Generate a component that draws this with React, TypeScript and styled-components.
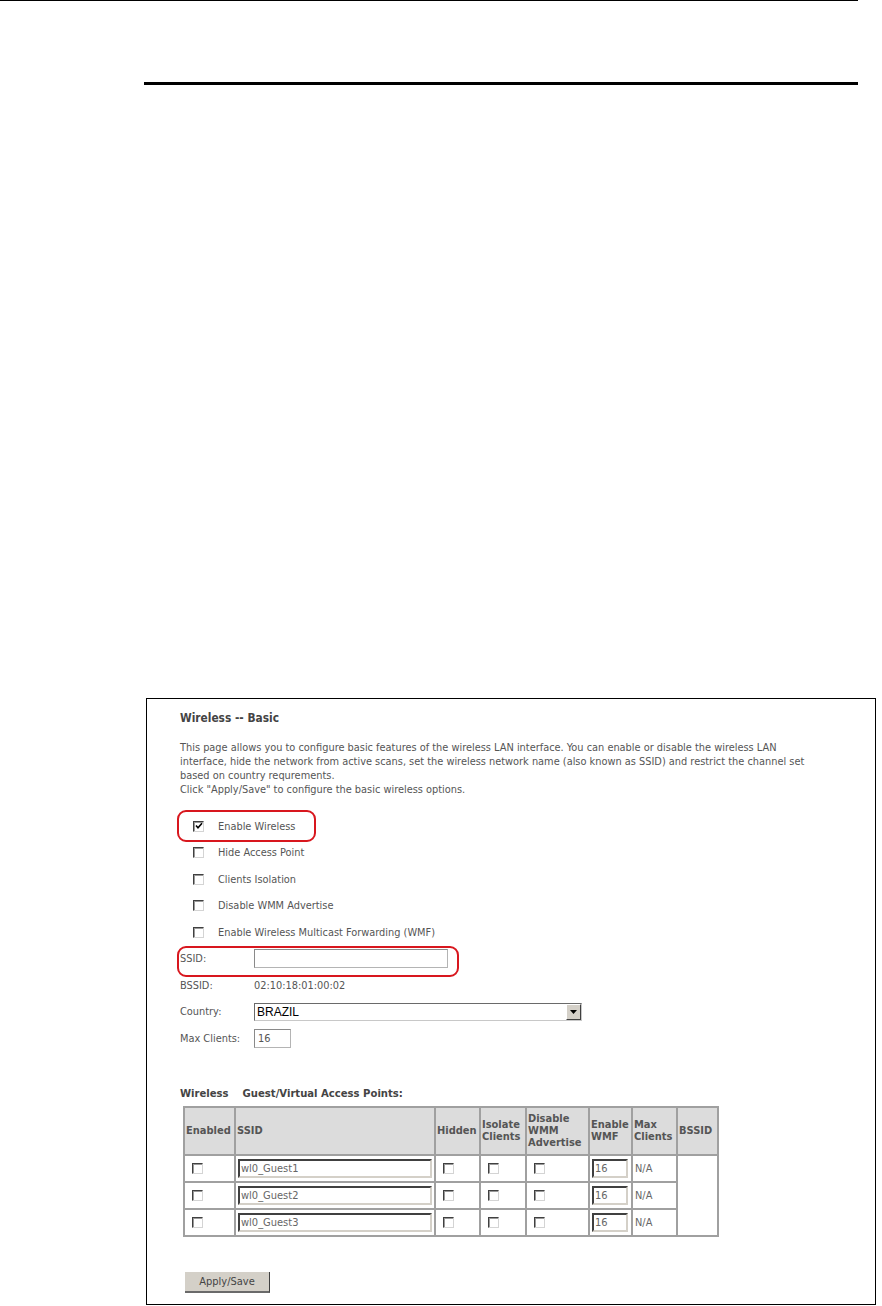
import React from 'react';
import styled, { createGlobalStyle } from 'styled-components';

const GlobalStyle = createGlobalStyle`
  body {
    margin: 0;
    background: #ffffff;
    font-family: "DejaVu Sans Condensed", "Liberation Sans", sans-serif;
  }
`;

const FONT = `"DejaVu Sans Condensed", "Liberation Sans", sans-serif`;

interface GuestAp {
  ssid: string;
  maxClients: string;
}

const guests: GuestAp[] = [
  { ssid: 'wl0_Guest1', maxClients: '16' },
  { ssid: 'wl0_Guest2', maxClients: '16' },
  { ssid: 'wl0_Guest3', maxClients: '16' },
];

const options = [
  { label: 'Enable Wireless', checked: true, ring: true },
  { label: 'Hide Access Point', checked: false, ring: false },
  { label: 'Clients Isolation', checked: false, ring: false },
  { label: 'Disable WMM Advertise', checked: false, ring: false },
  { label: 'Enable Wireless Multicast Forwarding (WMF)', checked: false, ring: false },
];

const introLines = [
  'This page allows you to configure basic features of the wireless LAN interface. You can enable or disable the wireless LAN',
  'interface, hide the network from active scans, set the wireless network name (also known as SSID) and restrict the channel set',
  'based on country requrements.',
  'Click "Apply/Save" to configure the basic wireless options.',
];

const Box = ({ checked }: { checked?: boolean }) => (
  <CheckBox>
    {checked && (
      <svg width="8" height="8" viewBox="0 0 8 8">
        <path d="M1 3.5 L3 5.8 L7 1.2" fill="none" stroke="#000" strokeWidth="1.6" />
      </svg>
    )}
  </CheckBox>
);

const App = () => {
  return (
    <Page>
      <GlobalStyle />
      <TopRule />
      <HeadingRule />
      <Shot>
        <Title>Wireless -- Basic</Title>
        <Intro>
          {introLines.map((line) => (
            <div key={line}>{line}</div>
          ))}
        </Intro>

        <OptionList>
          {options.map((o) => (
            <OptionRow key={o.label}>
              <Box checked={o.checked} />
              <span>{o.label}</span>
              {o.ring && <Ring $width={139} $height={32} $top={-3} />}
            </OptionRow>
          ))}
        </OptionList>

        <FieldList>
          <FieldRow>
            <FieldLabel>SSID:</FieldLabel>
            <TextField $width={194} />
            <Ring $width={282} $height={31} $top={0} />
          </FieldRow>
          <FieldRow>
            <FieldLabel>BSSID:</FieldLabel>
            <span>02:10:18:01:00:02</span>
          </FieldRow>
          <FieldRow>
            <FieldLabel>Country:</FieldLabel>
            <SelectBox>
              <SelectText>BRAZIL</SelectText>
              <SelectArrow>
                <svg width="7" height="4" viewBox="0 0 7 4">
                  <path d="M0 0 H7 L3.5 4 Z" fill="#000" />
                </svg>
              </SelectArrow>
            </SelectBox>
          </FieldRow>
          <FieldRow>
            <FieldLabel>Max Clients:</FieldLabel>
            <TextField $width={37}>16</TextField>
          </FieldRow>
        </FieldList>

        <SubTitle>Wireless&nbsp;&nbsp;&nbsp; Guest/Virtual Access Points:</SubTitle>

        <GuestTable>
          <colgroup>
            <col style={{ width: 51 }} />
            <col style={{ width: 200 }} />
            <col style={{ width: 45 }} />
            <col style={{ width: 46 }} />
            <col style={{ width: 63 }} />
            <col style={{ width: 43 }} />
            <col style={{ width: 45 }} />
            <col style={{ width: 41 }} />
          </colgroup>
          <thead>
            <tr>
              <Th>Enabled</Th>
              <Th>SSID</Th>
              <Th>Hidden</Th>
              <Th>Isolate Clients</Th>
              <Th>Disable WMM Advertise</Th>
              <Th>Enable WMF</Th>
              <Th>Max Clients</Th>
              <Th>BSSID</Th>
            </tr>
          </thead>
          <tbody>
            {guests.map((g, i) => (
              <tr key={g.ssid}>
                <Td><Box /></Td>
                <Td><SunkenField $width={194}>{g.ssid}</SunkenField></Td>
                <Td><Box /></Td>
                <Td><Box /></Td>
                <Td><Box /></Td>
                <Td><SunkenField $width={36}>{g.maxClients}</SunkenField></Td>
                <Td>N/A</Td>
                {i === 0 && <Td rowSpan={3} />}
              </tr>
            ))}
          </tbody>
        </GuestTable>

        <ApplyButton>Apply/Save</ApplyButton>
      </Shot>
    </Page>
  );
};

export default App;

const Page = styled.div`
  width: 882px;
  height: 1306px;
  overflow: hidden;
`;

const TopRule = styled.div`
  width: 858px;
  height: 1px;
  background: #000;
`;

const HeadingRule = styled.div`
  margin: 81px 0 0 144px;
  width: 714px;
  height: 3px;
  background: #000;
`;

const Shot = styled.div`
  box-sizing: border-box;
  margin: 613px 0 0 146px;
  width: 730px;
  height: 607px;
  border: 1px solid #000;
  padding: 12px 0 0 33px;
  font-family: ${FONT};
  font-size: 10.9px;
  color: #555;
`;

const Title = styled.div`
  font-size: 11.8px;
  line-height: 14px;
  font-weight: bold;
  color: #444;
`;

const Intro = styled.div`
  margin-top: 16px;
  line-height: 14px;
  white-space: nowrap;
`;

const OptionList = styled.div`
  margin-top: 16px;
  display: flex;
  flex-direction: column;
`;

const OptionRow = styled.div`
  position: relative;
  height: 26.5px;
  display: flex;
  align-items: center;
  gap: 14px;
  padding-left: 13px;
`;

const CheckBox = styled.span`
  box-sizing: border-box;
  width: 11px;
  height: 11px;
  flex: none;
  display: inline-flex;
  align-items: center;
  justify-content: center;
  vertical-align: middle;
  background: #fff;
  border-top: 1px solid #404040;
  border-left: 1px solid #404040;
  border-bottom: 1px solid #d4d4d4;
  border-right: 1px solid #d4d4d4;
  box-shadow: inset 1px 1px 0 #9a9a9a;
`;

const Ring = styled.div<{ $width: number; $height: number; $top: number }>`
  position: absolute;
  left: -3px;
  top: ${(p) => p.$top}px;
  width: ${(p) => p.$width}px;
  height: ${(p) => p.$height}px;
  box-sizing: border-box;
  border: 2.5px solid #d8171e;
  border-radius: 9px;
  pointer-events: none;
`;

const FieldList = styled.div`
  display: flex;
  flex-direction: column;
`;

const FieldRow = styled.div`
  position: relative;
  height: 26.5px;
  display: flex;
  align-items: center;
`;

const FieldLabel = styled.span`
  width: 74px;
  flex: none;
  white-space: nowrap;
`;

const TextField = styled.div<{ $width: number }>`
  box-sizing: border-box;
  width: ${(p) => p.$width}px;
  height: 19px;
  border: 1px solid #b4b4b4;
  border-top-color: #8a8a8a;
  border-left-color: #8a8a8a;
  background: #fff;
  padding: 2px 3px;
  line-height: 13px;
`;

const SelectBox = styled.div`
  box-sizing: border-box;
  width: 328px;
  height: 18px;
  display: flex;
  align-items: center;
  justify-content: space-between;
  border: 1px solid #c8c8c8;
  border-top-color: #6a6a6a;
  border-left-color: #6a6a6a;
  background: #fff;
`;

const SelectText = styled.span`
  padding-left: 2px;
  font-family: "Liberation Sans", Arial, sans-serif;
  font-size: 12px;
  color: #000;
`;

const SelectArrow = styled.span`
  box-sizing: border-box;
  width: 15px;
  height: 16px;
  display: flex;
  align-items: center;
  justify-content: center;
  background: #d4d0c8;
  border: 1px solid #fff;
  border-right-color: #404040;
  border-bottom-color: #404040;
`;

const SubTitle = styled.div`
  margin-top: 35px;
  font-size: 11.2px;
  line-height: 14px;
  font-weight: bold;
  color: #444;
`;

const GuestTable = styled.table`
  margin: 5px 0 0 3px;
  width: 535px;
  table-layout: fixed;
  border-collapse: collapse;
  border: 2px solid #a0a0a0;
`;

const Th = styled.th`
  height: 46px;
  padding: 0 1px;
  background: #dcdcdc;
  border: 2px solid #a0a0a0;
  text-align: left;
  vertical-align: middle;
  font-size: 11px;
  line-height: 12px;
  font-weight: bold;
  color: #555;
`;

const Td = styled.td`
  height: 25px;
  padding: 0 0 0 2px;
  border: 2px solid #a0a0a0;
  background: #fff;
  vertical-align: middle;
  color: #666;
  & > span {
    margin-left: 5px;
  }
`;

const SunkenField = styled.div<{ $width: number }>`
  box-sizing: border-box;
  width: ${(p) => p.$width}px;
  height: 19px;
  border: 2px solid #404040;
  border-right-color: #d4d0c8;
  border-bottom-color: #d4d0c8;
  background: #fff;
  padding: 1px 1px;
  line-height: 14px;
  font-size: 11px;
  color: #666;
`;

const ApplyButton = styled.button`
  display: block;
  margin: 35px 0 0 5px;
  width: 85px;
  height: 21px;
  padding: 0;
  background: #d4d0c8;
  border: none;
  border-right: 1px solid #404040;
  border-bottom: 2px solid #6a6a6a;
  font-family: ${FONT};
  font-size: 11px;
  color: #444;
`;
